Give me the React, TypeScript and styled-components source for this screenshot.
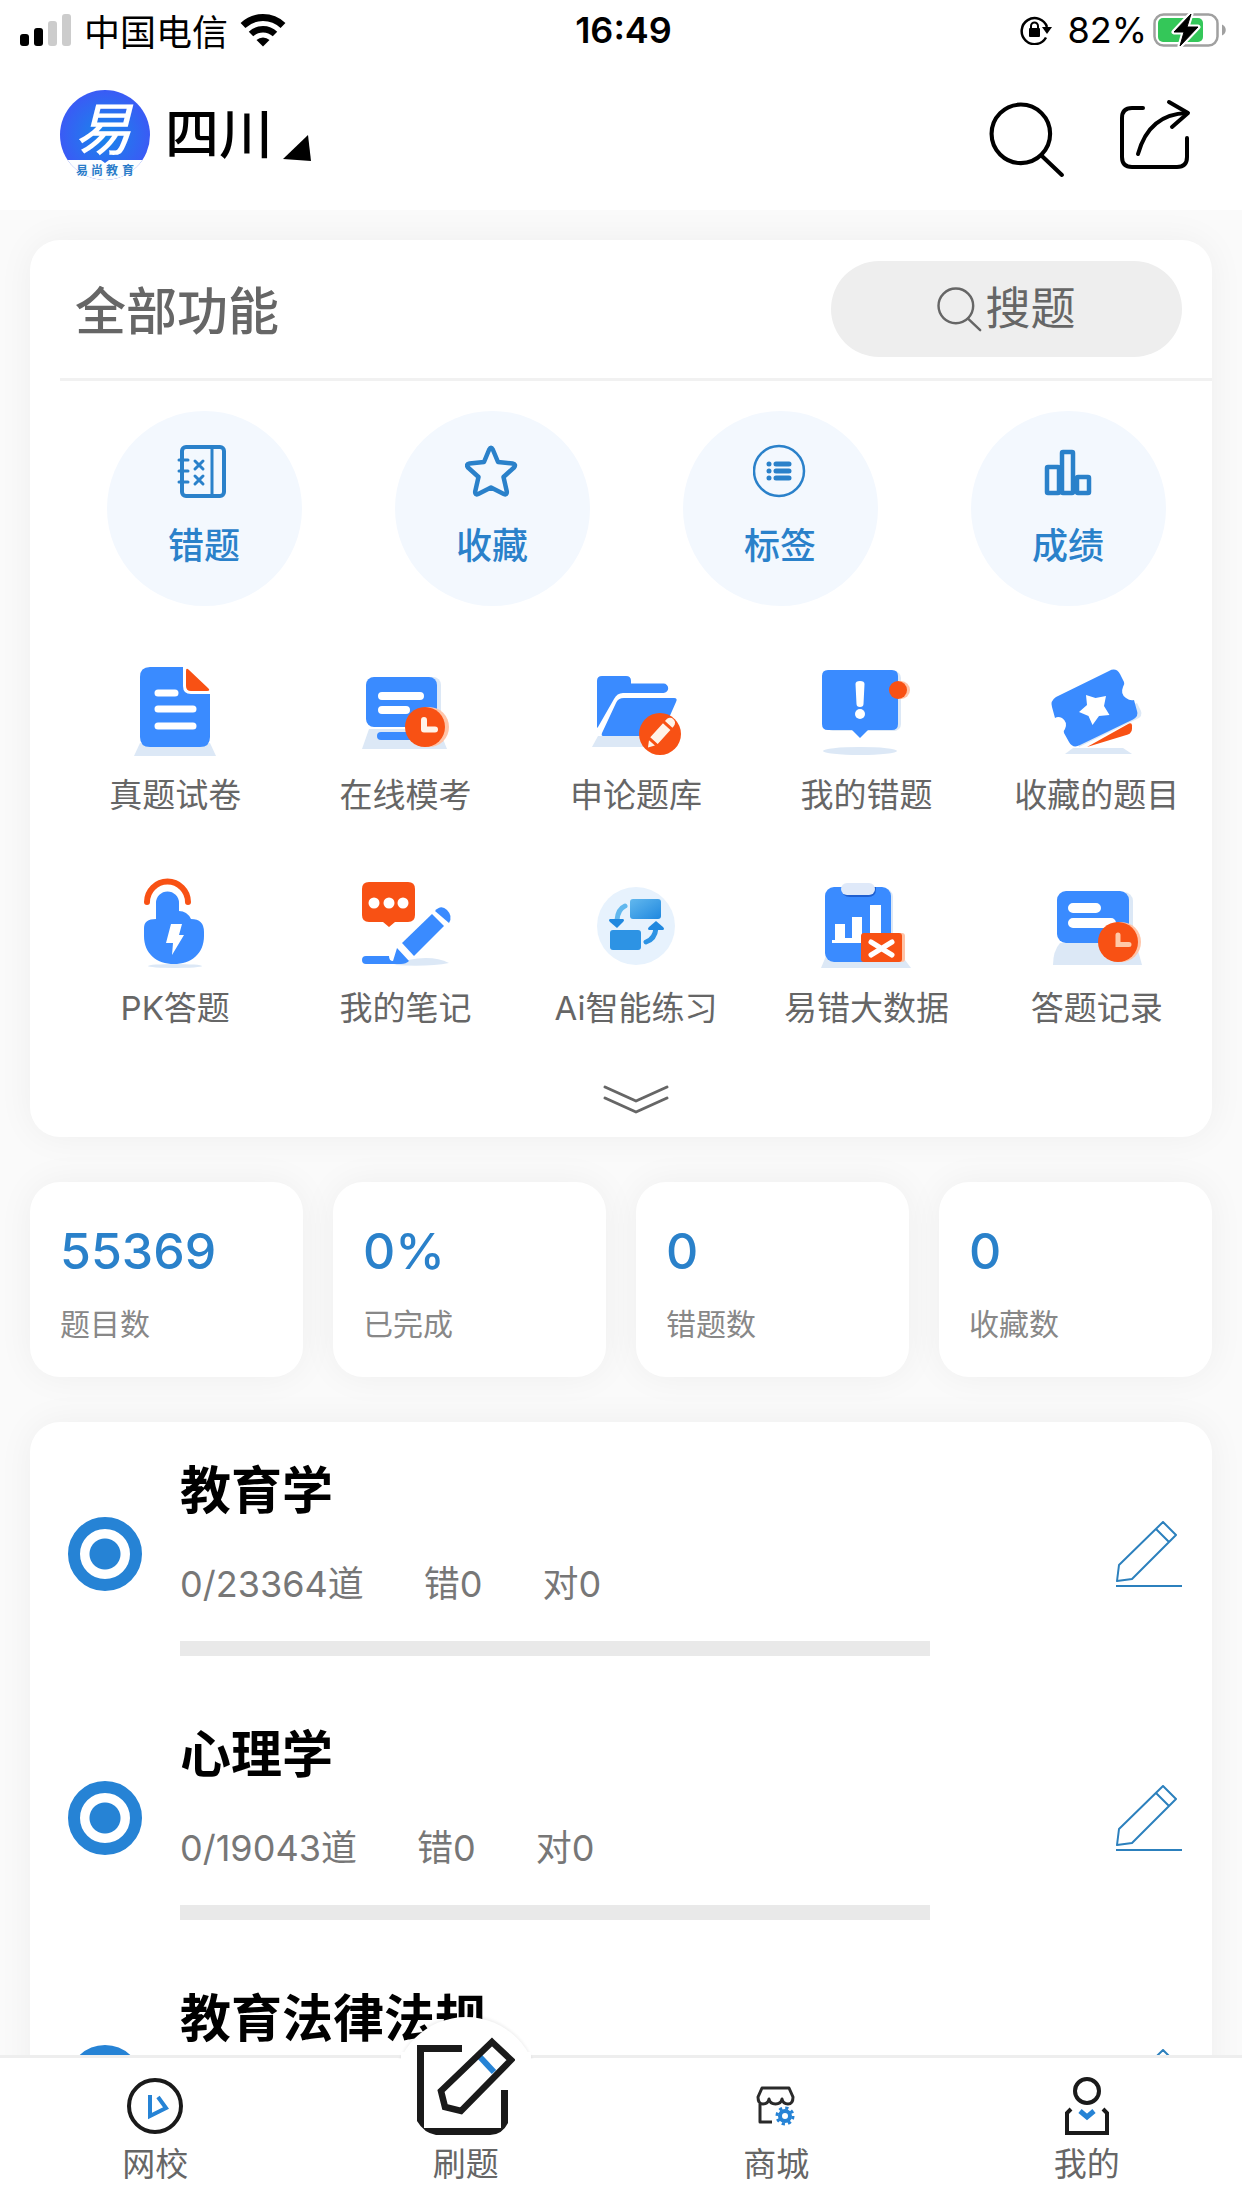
import React from "react";
import styled, { createGlobalStyle } from "styled-components";

const BLUE = "#2683d5";
const INK_BLUE = "#2a81ca";
const SOLID = "#3a8bff";
const ORANGE = "#f85114";
const SHADE = "#dce8f6";

const GlobalStyle = createGlobalStyle`
  * { box-sizing: border-box; }
  body {
    margin: 0;
    background: #fafafa;
    color: #000;
    font-family: Inter, "Noto Sans CJK SC", sans-serif;
  }
  button {
    border: 0;
    padding: 0;
    margin: 0;
    background: none;
    color: inherit;
    font: inherit;
    cursor: pointer;
  }
  h1, h2, h3, p, ul, dl, dd { margin: 0; padding: 0; }
  ul { list-style: none; }
  svg { display: block; flex: none; }
`;

const Shell = styled.div`
  display: flex;
  flex-direction: column;
  height: 100vh;
`;

const TopArea = styled.header`
  position: relative;
  z-index: 1;
  background: #fff;
`;

const StatusBar = styled.div`
  display: grid;
  grid-template-columns: 1fr auto 1fr;
  align-items: center;
  height: 60px;
  padding: 0 15px 0 20px;
  font-size: 36px;
`;

const StatusGroup = styled.div<{ $end?: boolean }>`
  display: flex;
  align-items: center;
  justify-content: ${(p) => (p.$end ? "flex-end" : "flex-start")};
  gap: ${(p) => (p.$end ? "6px" : "12px")};
`;

const Clock = styled.time`
  font-size: 36px;
  font-weight: 600;
`;

const NavBar = styled.div`
  display: flex;
  align-items: center;
  justify-content: space-between;
  height: 150px;
  padding: 0 51px 0 60px;
`;

const Region = styled.button`
  display: flex;
  align-items: center;
  gap: 15px;
  font-size: 54px;
  font-weight: 500;
  line-height: 90px;
`;

const RegionName = styled.span`
  display: flex;
  align-items: center;
  gap: 9px;
`;

const NavActions = styled.div`
  display: flex;
  align-items: center;
  gap: 54px;
  padding-top: 9px;
`;

const Content = styled.main`
  flex: 1;
  min-height: 0;
  overflow-y: auto;
  scrollbar-width: none;
  display: flex;
  flex-direction: column;
  gap: 45px;
  padding: 30px 30px 0;
`;

const Card = styled.section`
  flex: none;
  background: #fff;
  border-radius: 30px;
  box-shadow: 0 0 36px rgba(0, 0, 0, 0.05);
`;

const CardHead = styled.div`
  display: flex;
  align-items: center;
  justify-content: space-between;
  height: 141px;
  margin-left: 30px;
  padding: 0 30px 0 15px;
  border-bottom: 3px solid #f1f1f1;
`;

const CardTitle = styled.h1`
  padding-top: 6px;
  color: #666;
  font-size: 51px;
  font-weight: 500;
  line-height: 66px;
`;

const SearchPill = styled.button`
  display: flex;
  align-items: center;
  justify-content: center;
  gap: 3px;
  width: 351px;
  height: 96px;
  border-radius: 48px;
  background: #eee;
  color: #666;
  font-size: 45px;
  line-height: 60px;
`;

const QuickGrid = styled.div`
  display: grid;
  grid-template-columns: repeat(4, 1fr);
  justify-items: center;
  margin-left: 30px;
  padding-top: 30px;
`;

const QuickButton = styled.button`
  display: flex;
  flex-direction: column;
  align-items: center;
  gap: 24px;
  width: 195px;
  height: 195px;
  padding-top: 33px;
  border-radius: 50%;
  background: #f3f8fe;
  color: ${INK_BLUE};
  font-size: 36px;
  font-weight: 500;
  line-height: 48px;
`;

const FeatureGrid = styled.div`
  display: grid;
  grid-template-columns: repeat(5, 1fr);
  row-gap: 57px;
  margin-left: 30px;
  padding-top: 57px;
`;

const FeatureButton = styled.button`
  display: flex;
  flex-direction: column;
  align-items: center;
  gap: 12px;
  color: #666;
  font-size: 33px;
  line-height: 48px;
  white-space: nowrap;
`;

const MoreButton = styled.button`
  display: flex;
  align-items: center;
  justify-content: center;
  width: 100%;
  height: 75px;
  margin-top: 30px;
  padding-left: 30px;
`;

const Stats = styled.dl`
  flex: none;
  display: grid;
  grid-template-columns: repeat(4, 1fr);
  gap: 30px;
`;

const Stat = styled.div`
  display: flex;
  flex-direction: column-reverse;
  gap: 21px;
  padding: 39px 30px 30px;
  border-radius: 30px;
  background: #fff;
  box-shadow: 0 0 36px rgba(0, 0, 0, 0.05);
`;

const StatValue = styled.dd`
  color: ${INK_BLUE};
  font-size: 50px;
  font-weight: 500;
  line-height: 60px;
`;

const StatLabel = styled.dt`
  color: #888;
  font-size: 30px;
  line-height: 45px;
`;

const Subject = styled.li`
  display: grid;
  grid-template-columns: 150px 1fr 282px;
  align-items: center;
`;

const SubjectBody = styled.div`
  padding: 36px 0 30px;
`;

const SubjectRadio = styled.input`
  appearance: none;
  justify-self: center;
  width: 74px;
  height: 74px;
  margin: 0;
  border: 12px solid ${BLUE};
  border-radius: 50%;
  background: radial-gradient(circle, ${BLUE} 15px, #fff 16px);
`;

const SubjectTitle = styled.label`
  display: block;
  font-size: 51px;
  font-weight: 700;
  line-height: 66px;
  white-space: nowrap;
`;

const SubjectCounts = styled.p`
  display: flex;
  gap: 60px;
  margin-top: 33px;
  color: #777;
  font-size: 36px;
  line-height: 54px;
`;

const Progress = styled.div`
  height: 15px;
  margin-top: 30px;
  background: #e9e9e9;
`;

const ProgressFill = styled.div`
  height: 100%;
  background: ${BLUE};
`;

const EditButton = styled.button`
  justify-self: end;
  margin-right: 30px;
`;

const TabBar = styled.nav`
  position: relative;
  z-index: 1;
  display: grid;
  grid-template-columns: repeat(4, 1fr);
  height: 153px;
  border-top: 3px solid #eee;
  background: #fff;
`;

const Tab = styled.button`
  position: relative;
  display: flex;
  flex-direction: column;
  align-items: center;
  justify-content: flex-end;
  padding-bottom: 21px;
  color: #666;
  font-size: 33px;
  line-height: 45px;
`;

const TabIcon = styled.span`
  display: flex;
  align-items: center;
  justify-content: center;
  height: 72px;
`;

const Bulge = styled.span`
  position: absolute;
  left: 50%;
  top: -41px;
  width: 144px;
  height: 144px;
  margin-left: -72px;
  border-radius: 50%;
  background: #fff;
  box-shadow: 0 -2px 3px rgba(0, 0, 0, 0.06);
  clip-path: inset(-6px -6px 102px -6px);
`;

const BulgeBase = styled.span`
  position: absolute;
  left: 50%;
  top: -6px;
  width: 130px;
  height: 60px;
  margin-left: -65px;
  background: #fff;
`;

const RaisedIcon = styled.span`
  position: absolute;
  left: 50%;
  top: -21px;
  margin-left: -49px;
`;

type SvgProps = { w: number; h?: number; children: React.ReactNode };
const Svg = ({ w, h = w, children }: SvgProps) => (
  <svg width={w} height={h} viewBox={`0 0 ${w} ${h}`} fill="none" aria-hidden="true">
    {children}
  </svg>
);

/* Status bar */
const Signal = () => (
  <Svg w={52} h={32}>
    <rect x="0" y="20" width="9" height="12" rx="3" fill="#000" />
    <rect x="14" y="14" width="9" height="18" rx="3" fill="#000" />
    <rect x="28" y="7" width="9" height="25" rx="3" fill="#ccc" />
    <rect x="42" y="0" width="9" height="32" rx="3" fill="#ccc" />
  </Svg>
);
const Wifi = () => (
  <Svg w={46} h={34}>
    <path d="M3 12.5a29 29 0 0 1 40 0" stroke="#000" strokeWidth="7" />
    <path d="M11 21a17.500 17.500 0 0 1 24 0" stroke="#000" strokeWidth="6.500" />
    <path d="M23 33.500l-6.500-6.500a9.500 9.500 0 0 1 13 0z" fill="#000" />
  </Svg>
);
const RotationLock = () => (
  <Svg w={41} h={30}>
    <path d="M26 22.500A13 13 0 1 1 27 12" stroke="#000" strokeWidth="2.500" />
    <path d="M22 12h10l-5 7z" fill="#000" />
    <rect x="9" y="13" width="11" height="9" rx="1" fill="#000" />
    <path d="M11 14v-3a3.500 3.500 0 0 1 7 0v3" stroke="#000" strokeWidth="2" />
  </Svg>
);
const Battery = () => (
  <Svg w={74} h={36}>
    <rect x="1.500" y="2.500" width="63" height="31" rx="9" stroke="#a0a0a0" strokeWidth="2.500" />
    <path d="M69 12.500c5 2 5 9 0 11z" fill="#a0a0a0" />
    <rect x="5" y="6" width="45" height="24" rx="5" fill="#34c759" />
    <path d="M38 2L21 20h10l-4 14 18-19H34z" fill="#fff" stroke="#fff" strokeWidth="5" strokeLinejoin="round" />
    <path d="M38 2L21 20h10l-4 14 18-19H34z" fill="#000" stroke="#000" strokeWidth="1" strokeLinejoin="round" />
  </Svg>
);

/* Header */
const Logo = () => (
  <Svg w={90}>
    <defs>
      <radialGradient id="logoFill">
        <stop offset="0" stopColor="#1787ea" />
        <stop offset="1" stopColor="#3a5bf5" />
      </radialGradient>
      <clipPath id="logoClip">
        <circle cx="45" cy="45" r="45" />
      </clipPath>
    </defs>
    <g clipPath="url(#logoClip)">
      <rect width="90" height="90" fill="url(#logoFill)" />
      <path d="M0 70h41l4 3 4-3h41v20H0z" fill="#fbfdff" />
    </g>
    <text x="43" y="60" textAnchor="middle" fontSize="57" fontWeight="500" fontStyle="italic" fill="#fff" fontFamily='"Noto Sans CJK SC", sans-serif'>易</text>
    <text x="16 31 46 62" y="85" fontSize="12" fontWeight="700" fill="#2a7cc9" fontFamily='"Noto Sans CJK SC", sans-serif'>易尚教育</text>
  </Svg>
);
const Corner = () => (
  <Svg w={30} h={52}>
    <path d="M1 50L26 26l3 26z" fill="#000" />
  </Svg>
);
const SearchIcon = ({ size, color, weight }: { size: number; color: string; weight: number }) => (
  <svg width={size} height={size} viewBox="0 0 74 74" fill="none" stroke={color} strokeWidth={weight} strokeLinecap="round" aria-hidden="true">
    <circle cx="31" cy="31" r="28.500" />
    <path d="M51 52l20 19" />
  </svg>
);
const ShareIcon = () => (
  <Svg w={72} h={84}>
    <g stroke="#000" strokeWidth="4" strokeLinecap="round" strokeLinejoin="round">
      <path d="M24 10H13Q3 10 3 20v39q0 10 10 10h45q10 0 10-10V40" />
      <path d="M19 56Q30 16 68 15" />
      <path d="M50 4l19 11-16 14" />
    </g>
  </Svg>
);

/* Round shortcuts */
const line = { stroke: INK_BLUE, strokeWidth: 4, strokeLinecap: "round", strokeLinejoin: "round" } as const;
const NotebookIcon = () => (
  <Svg w={54}>
    <g {...line} strokeWidth={3}>
      <rect x="5" y="3" width="42" height="49" rx="4" strokeWidth="4" />
      <path d="M35 3v49M2 16h9M2 27h9M2 38h9" />
      <path d="M18 17l8 8M26 17l-8 8M18 32l8 8M26 32l-8 8" />
    </g>
  </Svg>
);
const StarIcon = () => (
  <Svg w={54}>
    <path {...line} strokeWidth={4.5} d="M24.200 5.500q1.800-3.500 3.600 0l5.200 12.500 14.500 1.500q4 .8 1.500 4L38.500 33l3.300 14.500q.4 4-3 2.500L26 43.500 13.200 50q-3.400 1.500-3-2.500L13.500 33 3 23.500q-2.500-3.200 1.500-4L19 18z" />
  </Svg>
);
const ListIcon = () => (
  <Svg w={54}>
    <circle cx="26" cy="27" r="25" stroke={INK_BLUE} strokeWidth="2.500" />
    <path {...line} strokeWidth={5} d="M23 20h13M23 27h13M23 34h13" />
    <path {...line} strokeWidth={5} d="M16 20h0M16 27h0M16 34h0" />
  </Svg>
);
const BarsIcon = () => (
  <Svg w={54}>
    <g stroke={INK_BLUE} strokeWidth="4.500">
      <rect x="6" y="23" width="12" height="26" rx="1" />
      <rect x="21" y="8" width="11" height="41" rx="1" />
      <rect x="36" y="33" width="12" height="16" rx="1" />
    </g>
  </Svg>
);

/* Feature icons */
const PaperIcon = () => (
  <Svg w={96}>
    <path d="M13 80h70l6 13H7z" fill={SHADE} />
    <path d="M23 4h33v19q0 8 8 8h19v43q0 10-10 10H23q-10 0-10-10V14Q13 4 23 4z" fill={SOLID} />
    <path d="M59 8q0-4 3-1l19 18q3 3-1 3H64q-5 0-5-5z" fill={ORANGE} />
    <path d="M31 30h17M31 46h35M31 63h35" stroke="#fff" strokeWidth="7" strokeLinecap="round" />
  </Svg>
);
const ExamIcon = () => (
  <Svg w={96}>
    <path d="M11 66h70l8 20H4z" fill={SHADE} />
    <rect x="11" y="14" width="72" height="50" rx="8" fill={SHADE} />
    <rect x="8" y="14" width="71" height="50" rx="8" fill={SOLID} />
    <path d="M24 33h38M24 47h24" stroke="#fff" strokeWidth="8" strokeLinecap="round" />
    <path d="M23 73h34" stroke={SOLID} strokeWidth="8" strokeLinecap="round" />
    <circle cx="71" cy="64" r="20" fill="#ffc4a8" />
    <circle cx="67" cy="64" r="20" fill={ORANGE} />
    <path d="M66 57v9.500h11" stroke="#fff3e8" strokeWidth="6" strokeLinecap="round" strokeLinejoin="round" />
  </Svg>
);
const FolderIcon = () => (
  <Svg w={96}>
    <path d="M10 73h64v11H4z" fill={SHADE} />
    <path d="M9 18q0-5 5-5h24q5 0 5 5v2.500h32.500a4.700 4.700 0 0 1 0 9.400H35q-6 0-9 6L10 64l-1 1z" fill={SOLID} />
    <path d="M15 73q-2 0-1-3l14-30q2-5 8-5h50q4 0 2 4L73 73z" fill={SOLID} />
    <circle cx="72" cy="71" r="21" fill={ORANGE} />
    <g transform="translate(72 71) rotate(42)" fill="#fff3e8">
      <path d="M-5 -13v-2a5 5 0 0 1 10 0v2zM-5 -10H5V9H-5zM-4 12H4L0 18z" />
    </g>
  </Svg>
);
const AlertIcon = () => (
  <Svg w={96}>
    <ellipse cx="42" cy="88" rx="37" ry="4" fill={SHADE} />
    <rect x="8" y="8" width="75" height="60" rx="7" fill={SHADE} />
    <path d="M10 7h64q6 0 6 6v48q0 6-6 6H50l-8 8-8-8H10q-6 0-6-6V13q0-6 6-6z" fill={SOLID} />
    <path d="M37.500 21q0-3 4.500-3t4.500 3l-1 20q0 3-3.500 3t-3.500-3z" fill="#fff" />
    <circle cx="42" cy="51" r="5" fill="#fff" />
    <circle cx="83" cy="27" r="9" fill="#ffc4a8" />
    <circle cx="80" cy="27" r="9" fill={ORANGE} />
  </Svg>
);
const TicketIcon = () => (
  <Svg w={96}>
    <path d="M24 85h50l9 6H16z" fill={SHADE} />
    <path d="M38 84L80 60.500q3-1 3 2v3q0 4-4 6z" fill={ORANGE} />
    <path d="M30 84l58-28q6-3 4-8l-4-8-20 8-40 26z" fill={SHADE} />
    <path d="M7 34L60 8q7-4 11 3l4 8q1 2-1 5-3 7 3 11 4 3 8 2l3 11q2 5-4 8.500L31 82q-7 4-11-3l-5-9q-1-2 1-4 3-7-3-11-4-2-7 0L3 44q-2-6 4-10z" fill={SOLID} />
    <path d="M37 32l9.500 3L57 33l-2 10 5.500 9-10.500 1-6.500 9-4-9-9.500-4 8-7z" fill="#fff" />
  </Svg>
);
const PkIcon = () => (
  <Svg w={96}>
    <ellipse cx="48" cy="90" rx="27" ry="2" fill={SHADE} />
    <path d="M20 26a20 20 0 0 1 41 0" stroke={ORANGE} strokeWidth="6" strokeLinecap="round" />
    <path d="M29 27a11.500 11.500 0 0 1 23 0v8q8 0 12 8 13 0 13 13v4C77 78 64 88 47 88S17 78 17 60v-8q0-9 12-9z" fill={SOLID} />
    <path d="M44 48h11l-3 11h5L45 79l1-12h-7z" fill="#fff" />
  </Svg>
);
const NotesIcon = () => (
  <Svg w={96}>
    <path d="M50 84q25-5 41 3-20 4-55 2z" fill={SHADE} />
    <path d="M11 6h39q7 0 7 7v26q0 7-7 7H37l-6 5-6-5H11q-7 0-7-7V13q0-7 7-7z" fill={ORANGE} />
    <g fill="#fff">
      <circle cx="16" cy="27" r="5.500" />
      <circle cx="31" cy="27" r="5.500" />
      <circle cx="45" cy="27" r="5.500" />
    </g>
    <path d="M8 80h23q0 5 4 5l4-13 12 13q-3 3-8 3H8a4 4 0 0 1 0-8z" fill={SOLID} />
    <path d="M44 67l30-29 12 12-30 30z" fill={SOLID} />
    <path d="M77 35q6-7 12-1t2 13z" fill={SOLID} />
  </Svg>
);
const AiIcon = () => (
  <Svg w={96}>
    <defs>
      <linearGradient id="aiFill" x1="0" y1="0" x2="1" y2="1">
        <stop offset="0" stopColor="#62b8ee" />
        <stop offset="1" stopColor="#2088df" />
      </linearGradient>
    </defs>
    <circle cx="48" cy="50" r="39" fill="#e7f2fd" />
    <rect x="42" y="23" width="31" height="20" rx="3" fill="url(#aiFill)" />
    <rect x="22" y="54" width="31" height="20" rx="3" fill="#2d93e4" />
    <path d="M37 30q-7 3-8 14" stroke="#62b8ee" strokeWidth="5" strokeLinecap="round" />
    <path d="M22 43h13q2 1 0 3l-6 6-7-6q-2-2 0-3z" fill="#2088df" />
    <path d="M58 66q9-3 10-14" stroke="#2d93e4" strokeWidth="5" strokeLinecap="round" />
    <path d="M61 54q-2-1 0-3l7-6 7 6q2 2 0 3z" fill="#2088df" />
  </Svg>
);
const DataIcon = () => (
  <Svg w={96}>
    <path d="M8 80h76l9 12H3z" fill={SHADE} />
    <rect x="10" y="12" width="65" height="74" rx="9" fill={SHADE} />
    <rect x="7" y="11" width="66" height="75" rx="9" fill={SOLID} />
    <path d="M24 11h34v2q0 8-8 8H32q-8 0-8-8z" fill="#1f5fd0" />
    <rect x="23" y="7" width="34" height="12" rx="6" fill="#dfe9f9" />
    <path d="M14 64h3V48h10v14h7V41h10v21h8V29h11v38H14z" fill="#fff" />
    <rect x="46" y="57" width="41" height="29" rx="3" fill="#ffc4a8" />
    <rect x="43" y="57" width="41" height="29" rx="3" fill={ORANGE} />
    <path d="M53 66l21 13M74 66L53 79" stroke="#fff" strokeWidth="5" strokeLinecap="round" />
  </Svg>
);
const RecordIcon = () => (
  <Svg w={96}>
    <path d="M11 67h76l6 22H4q0-14 7-22z" fill={SHADE} />
    <rect x="12" y="16" width="72" height="52" rx="9" fill={SHADE} />
    <rect x="8" y="15" width="72" height="52" rx="9" fill={SOLID} />
    <path d="M24 32h23M24 47h38" stroke="#fff" strokeWidth="10" strokeLinecap="round" />
    <circle cx="72" cy="66" r="20" fill="#ffc4a8" />
    <circle cx="69" cy="66" r="20" fill={ORANGE} />
    <path d="M69 59v9.500h11" stroke="#ffc9a8" strokeWidth="5" strokeLinecap="round" />
  </Svg>
);
const ChevronsIcon = () => (
  <Svg w={66} h={30}>
    <path d="M2 2l31 14L64 2M2 13l31 14 31-14" stroke="#666" strokeWidth="3" strokeLinecap="round" strokeLinejoin="round" />
  </Svg>
);
const PencilIcon = () => (
  <Svg w={66}>
    <g stroke="#2c80bd" strokeWidth="2" strokeLinejoin="round">
      <path d="M47 1l13 13-44 44-15 2 2-16zM40 8l13 13" />
      <path d="M0 65h66" />
    </g>
  </Svg>
);

/* Tab icons */
const SchoolIcon = () => (
  <Svg w={56}>
    <circle cx="28" cy="28" r="26" stroke="#1a1a1a" strokeWidth="4" />
    <path d="M23 17v21l16-8-8-11" stroke={BLUE} strokeWidth="4" />
  </Svg>
);
const PracticeIcon = () => (
  <Svg w={98}>
    <path d="M0 8h45v7H7v76h77V53h7v33q-6 12-18 12H19Q7 96 0 84z" fill="#1a1a1a" />
    <path d="M63 20l14 15" stroke={BLUE} strokeWidth="6" />
    <path d="M75 5l19 18-50 51-16-4-4-16z" stroke="#1a1a1a" strokeWidth="6.500" />
  </Svg>
);
const ShopIcon = () => (
  <Svg w={40}>
    <path d="M6 2h27l4 9q0 7-5 7t-6-5q-1 5-6.500 5T13 13q-1 5-6 5t-5-7zM4 18v18h12" stroke="#2a2a2a" strokeWidth="3" strokeLinejoin="round" />
    <circle cx="29" cy="30" r="5" stroke={BLUE} strokeWidth="4" />
    <circle cx="29" cy="30" r="8" stroke={BLUE} strokeWidth="3" strokeDasharray="3.200 3.080" />
  </Svg>
);
const PersonIcon = () => (
  <Svg w={44} h={58}>
    <circle cx="22" cy="14" r="12" stroke="#1a1a1a" strokeWidth="4" />
    <path d="M6 32l-4 4v20h40V36l-4-4" stroke="#1a1a1a" strokeWidth="4" />
    <path d="M15 34l7 6 7-6" stroke={BLUE} strokeWidth="5" />
  </Svg>
);

const shortcuts = [
  { label: "错题", icon: <NotebookIcon /> },
  { label: "收藏", icon: <StarIcon /> },
  { label: "标签", icon: <ListIcon /> },
  { label: "成绩", icon: <BarsIcon /> },
];

const features = [
  { label: "真题试卷", icon: <PaperIcon /> },
  { label: "在线模考", icon: <ExamIcon /> },
  { label: "申论题库", icon: <FolderIcon /> },
  { label: "我的错题", icon: <AlertIcon /> },
  { label: "收藏的题目", icon: <TicketIcon /> },
  { label: "PK答题", icon: <PkIcon /> },
  { label: "我的笔记", icon: <NotesIcon /> },
  { label: "Ai智能练习", icon: <AiIcon /> },
  { label: "易错大数据", icon: <DataIcon /> },
  { label: "答题记录", icon: <RecordIcon /> },
];

const stats = [
  { value: "55369", label: "题目数" },
  { value: "0%", label: "已完成" },
  { value: "0", label: "错题数" },
  { value: "0", label: "收藏数" },
];

const subjects = [
  { id: "pedagogy", title: "教育学", done: 0, total: 23364, wrong: 0, right: 0 },
  { id: "psychology", title: "心理学", done: 0, total: 19043, wrong: 0, right: 0 },
  { id: "law", title: "教育法律法规", done: 0, total: 12962, wrong: 0, right: 0 },
];

export default function App() {
  return (
    <>
      <GlobalStyle />
      <Shell>
        <TopArea>
          <StatusBar>
            <StatusGroup>
              <Signal />
              <span>中国电信</span>
              <Wifi />
            </StatusGroup>
            <Clock>16:49</Clock>
            <StatusGroup $end>
              <RotationLock />
              <span>82%</span>
              <Battery />
            </StatusGroup>
          </StatusBar>
          <NavBar>
            <Region>
              <Logo />
              <RegionName>
                四川
                <Corner />
              </RegionName>
            </Region>
            <NavActions>
              <button aria-label="搜索">
                <SearchIcon size={76} color="#000" weight={4} />
              </button>
              <button aria-label="分享">
                <ShareIcon />
              </button>
            </NavActions>
          </NavBar>
        </TopArea>

        <Content>
          <Card>
            <CardHead>
              <CardTitle>全部功能</CardTitle>
              <SearchPill>
                <SearchIcon size={45} color="#666" weight={4} />
                搜题
              </SearchPill>
            </CardHead>
            <QuickGrid>
              {shortcuts.map((s) => (
                <QuickButton key={s.label}>
                  {s.icon}
                  {s.label}
                </QuickButton>
              ))}
            </QuickGrid>
            <FeatureGrid>
              {features.map((f) => (
                <FeatureButton key={f.label}>
                  {f.icon}
                  {f.label}
                </FeatureButton>
              ))}
            </FeatureGrid>
            <MoreButton aria-label="展开">
              <ChevronsIcon />
            </MoreButton>
          </Card>

          <Stats>
            {stats.map((s) => (
              <Stat key={s.label}>
                <StatLabel>{s.label}</StatLabel>
                <StatValue>{s.value}</StatValue>
              </Stat>
            ))}
          </Stats>

          <Card as="ul">
            {subjects.map((s) => (
              <Subject key={s.id}>
                <SubjectRadio type="radio" id={s.id} name={s.id} defaultChecked />
                <SubjectBody>
                  <SubjectTitle htmlFor={s.id}>{s.title}</SubjectTitle>
                  <SubjectCounts>
                    <span>{s.done}/{s.total}道</span>
                    <span>错{s.wrong}</span>
                    <span>对{s.right}</span>
                  </SubjectCounts>
                  <Progress>
                    <ProgressFill style={{ width: `${(s.done / s.total) * 100}%` }} />
                  </Progress>
                </SubjectBody>
                <EditButton aria-label={`练习${s.title}`}>
                  <PencilIcon />
                </EditButton>
              </Subject>
            ))}
          </Card>
        </Content>

        <TabBar>
          <Tab>
            <TabIcon><SchoolIcon /></TabIcon>
            网校
          </Tab>
          <Tab>
            <Bulge />
            <BulgeBase />
            <RaisedIcon><PracticeIcon /></RaisedIcon>
            刷题
          </Tab>
          <Tab>
            <TabIcon><ShopIcon /></TabIcon>
            商城
          </Tab>
          <Tab>
            <TabIcon><PersonIcon /></TabIcon>
            我的
          </Tab>
        </TabBar>
      </Shell>
    </>
  );
}
